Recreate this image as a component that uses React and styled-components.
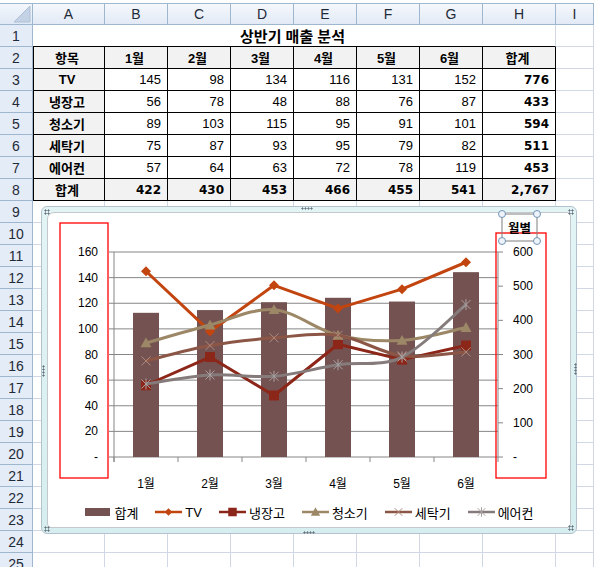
import React from 'react';
import styled, { createGlobalStyle, css } from 'styled-components';

const GlobalStyle = createGlobalStyle`
  html, body { margin: 0; padding: 0; background: #fff; }
  body {
    width: 594px;
    height: 567px;
    overflow: hidden;
    font-family: "Liberation Sans", "Noto Sans CJK KR", sans-serif;
  }
`;

const COLS = ['A', 'B', 'C', 'D', 'E', 'F', 'G', 'H', 'I'];
const MONTHS = ['1월', '2월', '3월', '4월', '5월', '6월'];

const SERIES = [
  { name: 'TV', values: [145, 98, 134, 116, 131, 152], total: 776, color: '#c2440f', marker: 'diamond' },
  { name: '냉장고', values: [56, 78, 48, 88, 76, 87], total: 433, color: '#8c2618', marker: 'square' },
  { name: '청소기', values: [89, 103, 115, 95, 91, 101], total: 594, color: '#9c8766', marker: 'triangle', smooth: true },
  { name: '세탁기', values: [75, 87, 93, 95, 79, 82], total: 511, color: '#8c5646', marker: 'x', smooth: true },
  { name: '에어컨', values: [57, 64, 63, 72, 78, 119], total: 453, color: '#857b7b', marker: 'star', smooth: true },
];
const TOTALS = [422, 430, 453, 466, 455, 541];
const BAR_COLOR = '#745252';

const Sheet = styled.div`
  position: relative;
  width: 594px;
  height: 567px;
  overflow: hidden;
  padding-top: 3px;
  box-sizing: border-box;
`;

const Grid = styled.div`
  display: grid;
  grid-template-columns: 33px 72px repeat(6, 63px) 73px 1fr;
  grid-template-rows: 22px repeat(25, 22px);
`;

const Corner = styled.div`
  box-sizing: border-box;
  border-top: 1px solid #9eb6ce;
  border-right: 1px solid #9eb6ce;
  border-bottom: 1px solid #9eb6ce;
  background: linear-gradient(#f3f7fc, #dfe8f5);
  display: flex;
  align-items: flex-end;
  justify-content: flex-end;
  padding: 0 1px 1px 0;
`;

const ColHead = styled.div`
  box-sizing: border-box;
  border-top: 1px solid #9eb6ce;
  border-right: 1px solid #9eb6ce;
  border-bottom: 1px solid #9eb6ce;
  background: linear-gradient(#f5f8fc, #e2eaf6);
  display: flex;
  align-items: center;
  justify-content: center;
  font-size: 14px;
  color: #1f2a38;
`;

const RowHead = styled.div`
  box-sizing: border-box;
  border-right: 1px solid #9eb6ce;
  border-bottom: 1px solid #9eb6ce;
  background: #e4ecf7;
  display: flex;
  align-items: center;
  justify-content: center;
  font-size: 14px;
  color: #1f2a38;
`;

const Cell = styled.div`
  box-sizing: border-box;
  grid-column: span ${p => p.$span || 1};
  border-right: 1px solid ${p => (p.$boxed ? '#000' : '#d0d7e5')};
  border-bottom: 1px solid ${p => (p.$boxed || p.$underline ? '#000' : '#d0d7e5')};
  ${p => p.$edge && css`box-shadow: inset 1px 0 0 #000;`}
  background: ${p => (p.$shade ? '#f2f2f2' : '#fff')};
  display: flex;
  align-items: center;
  justify-content: ${p => (p.$align === 'right' ? 'flex-end' : p.$align === 'center' ? 'center' : 'flex-start')};
  padding: 0 6px 0 3px;
  font-size: ${p => (p.$title ? '15px' : '13px')};
  font-weight: ${p => (p.$bold ? 700 : 400)};
  color: #000;
  white-space: nowrap;
  overflow: hidden;
`;

const Num = styled.span`
  font-family: ${p => (p.$bold ? '"DejaVu Sans", sans-serif' : '"Liberation Sans", sans-serif')};
  font-size: ${p => (p.$bold ? '12px' : '13px')};
  font-weight: ${p => (p.$bold ? 700 : 400)};
`;

/* floating chart object */
const ChartFrame = styled.div`
  position: absolute;
  left: 41px;
  top: 206px;
  width: 536px;
  height: 328px;
  box-sizing: border-box;
  padding: 5px;
  border: 1px solid #b3c2cc;
  border-radius: 6px;
  background: linear-gradient(#e3f4f5, #d6eeef);
`;

const ChartArea = styled.div`
  width: 100%;
  height: 100%;
  box-sizing: border-box;
  background: #fff;
  border: 1px solid #c4c8cc;
  border-radius: 7px 4px 4px 4px;
  display: flex;
  flex-direction: column;
`;

const Plot = styled.svg`
  display: block;
  overflow: visible;
  font-family: "Liberation Sans", "Noto Sans CJK KR", sans-serif;
`;

const Legend = styled.div`
  height: 26px;
  display: flex;
  align-items: center;
  justify-content: center;
  gap: 17px;
  font-size: 13px;
  color: #000;
`;

const LegendItem = styled.div`
  display: flex;
  align-items: center;
  gap: 3px;
`;

const Grip = styled.div`
  position: absolute;
  left: ${p => p.$x}px;
  top: ${p => p.$y}px;
  width: ${p => p.$w}px;
  height: ${p => p.$h}px;
  background: radial-gradient(circle, #66727e 0.9px, transparent 1.2px) 0 0 / 3px 3px;
`;

const X0 = 66;
const PW = 384;
const YB = 244;
const PH = 205;
const cx = i => X0 + 32 + 64 * i;
const yL = v => YB - (v * PH) / 160;
const yR = v => YB - (v * PH) / 600;

function straightPath(pts) {
  return pts.map((p, i) => `${i ? 'L' : 'M'}${p[0]},${p[1]}`).join(' ');
}

function smoothPath(pts) {
  let d = `M${pts[0][0]},${pts[0][1]}`;
  for (let i = 0; i < pts.length - 1; i++) {
    const p0 = pts[i - 1] || pts[i];
    const p1 = pts[i];
    const p2 = pts[i + 1];
    const p3 = pts[i + 2] || p2;
    const c1x = p1[0] + (p2[0] - p0[0]) / 6;
    const c1y = p1[1] + (p2[1] - p0[1]) / 6;
    const c2x = p2[0] - (p3[0] - p1[0]) / 6;
    const c2y = p2[1] - (p3[1] - p1[1]) / 6;
    d += ` C${c1x},${c1y} ${c2x},${c2y} ${p2[0]},${p2[1]}`;
  }
  return d;
}

function Marker({ type, x, y, color, s = 1 }) {
  if (type === 'diamond') {
    const r = 5 * s;
    return <polygon points={`${x},${y - r} ${x + r},${y} ${x},${y + r} ${x - r},${y}`} fill={color} />;
  }
  if (type === 'square') {
    const r = 5 * s;
    return <rect x={x - r} y={y - r} width={r * 2} height={r * 2} fill={color} />;
  }
  if (type === 'triangle') {
    const r = 5.5 * s;
    return <polygon points={`${x},${y - r} ${x + r},${y + r * 0.8} ${x - r},${y + r * 0.8}`} fill={color} />;
  }
  const r = 4.5 * s;
  return (
    <g stroke={type === 'x' ? '#b08a7c' : '#aaa2a2'} strokeWidth="1">
      <line x1={x - r} y1={y - r} x2={x + r} y2={y + r} />
      <line x1={x - r} y1={y + r} x2={x + r} y2={y - r} />
      {type === 'star' && <line x1={x} y1={y - r - 1} x2={x} y2={y + r + 1} />}
    </g>
  );
}

function LegendSwatch({ series }) {
  if (!series) {
    return (
      <svg width="27" height="12">
        <rect x="1" y="2" width="25" height="8" fill={BAR_COLOR} />
      </svg>
    );
  }
  return (
    <svg width="27" height="12">
      <line x1="0" y1="6" x2="27" y2="6" stroke={series.color} strokeWidth="2.5" />
      <Marker type={series.marker} x={13.5} y={6} color={series.color} s={series.marker === 'diamond' ? 0.75 : 0.85} />
    </svg>
  );
}

function Chart() {
  const leftTicks = [0, 1, 2, 3, 4, 5, 6, 7, 8];
  const rightTicks = [0, 1, 2, 3, 4, 5, 6];
  return (
    <ChartFrame>
      <ChartArea>
        <Plot width="522" height="286" viewBox="0 0 522 286">
          {leftTicks.map(k => {
            const y = YB - (k * PH) / 8;
            return (
              <g key={k}>
                <line x1={X0 - 5} y1={y} x2={X0 + PW} y2={y} stroke="#868686" strokeWidth="1" />
                <text x="50" y={y + 4} fontSize="12" textAnchor="end" fill="#000">
                  {k === 0 ? '-' : k * 20}
                </text>
              </g>
            );
          })}
          <line x1={X0} y1={YB - PH} x2={X0} y2={YB + 5} stroke="#868686" />
          <line x1={X0 + PW} y1={YB - PH} x2={X0 + PW} y2={YB} stroke="#868686" />
          {rightTicks.map(k => {
            const y = YB - (k * PH) / 6;
            return (
              <g key={k}>
                <line x1={X0 + PW} y1={y} x2={X0 + PW + 5} y2={y} stroke="#868686" />
                <text x="465" y={y + 4} fontSize="12" fill="#000">
                  {k === 0 ? '-' : k * 100}
                </text>
              </g>
            );
          })}
          {[0, 1, 2, 3, 4, 5, 6].map(i => (
            <line key={i} x1={X0 + 64 * i} y1={YB} x2={X0 + 64 * i} y2={YB + 5} stroke="#868686" />
          ))}
          {MONTHS.map((m, i) => (
            <text key={m} x={cx(i)} y="275" fontSize="12" textAnchor="middle" fill="#000">
              {m}
            </text>
          ))}
          {TOTALS.map((v, i) => (
            <rect key={i} x={cx(i) - 13} y={yR(v)} width="26" height={YB - yR(v)} fill={BAR_COLOR} />
          ))}
          {SERIES.map(s => {
            const pts = s.values.map((v, i) => [cx(i), yL(v)]);
            return (
              <g key={s.name}>
                <path
                  d={s.smooth ? smoothPath(pts) : straightPath(pts)}
                  fill="none"
                  stroke={s.color}
                  strokeWidth="3"
                  strokeLinejoin="round"
                />
                {pts.map((p, i) => (
                  <Marker key={i} type={s.marker} x={p[0]} y={p[1]} color={s.color} />
                ))}
              </g>
            );
          })}
          <rect x="12" y="10" width="48" height="255" fill="none" stroke="#ff0000" strokeWidth="1.3" />
          <rect x="448" y="20" width="50" height="245" fill="none" stroke="#ff0000" strokeWidth="1.3" />
          <text x="471.5" y="20" fontSize="12.5" fontWeight="700" textAnchor="middle" fill="#000">
            월별
          </text>
          <rect x="454" y="1" width="35" height="27" fill="none" stroke="#7f7f7f" strokeWidth="1" />
          {[[454, 1], [489, 1], [454, 28], [489, 28]].map(([x, y], i) => (
            <circle key={i} cx={x} cy={y} r="3.5" fill="#eef3f9" stroke="#7293b5" strokeWidth="1" />
          ))}
        </Plot>
        <Legend>
          <LegendItem>
            <LegendSwatch />
            <span>합계</span>
          </LegendItem>
          {SERIES.map(s => (
            <LegendItem key={s.name}>
              <LegendSwatch series={s} />
              <span>{s.name}</span>
            </LegendItem>
          ))}
        </Legend>
      </ChartArea>
      <Grip $x={2} $y={2} $w={6} $h={6} />
      <Grip $x={526} $y={2} $w={6} $h={6} />
      <Grip $x={2} $y={319} $w={6} $h={6} />
      <Grip $x={526} $y={318} $w={6} $h={6} />
      <Grip $x={259} $y={0} $w={12} $h={3} />
      <Grip $x={261} $y={324} $w={12} $h={3} />
      <Grip $x={0} $y={158} $w={3} $h={12} />
      <Grip $x={532} $y={156} $w={3} $h={12} />
    </ChartFrame>
  );
}

function SheetRow({ r }) {
  const cells = [];
  if (r === 1) {
    cells.push(
      <Cell key="title" $span={8} $align="center" $bold $title $underline>
        상반기 매출 분석
      </Cell>
    );
  } else if (r === 2) {
    cells.push(
      <Cell key="A" $boxed $edge $shade $bold $align="center">항목</Cell>,
      ...MONTHS.map(m => (
        <Cell key={m} $boxed $shade $bold $align="center">{m}</Cell>
      )),
      <Cell key="H" $boxed $shade $bold $align="center">합계</Cell>
    );
  } else if (r >= 3 && r <= 7) {
    const s = SERIES[r - 3];
    cells.push(
      <Cell key="A" $boxed $edge $shade $bold $align="center">{s.name}</Cell>,
      ...s.values.map((v, i) => (
        <Cell key={i} $boxed $align="right"><Num>{v}</Num></Cell>
      )),
      <Cell key="H" $boxed $align="right"><Num $bold>{s.total}</Num></Cell>
    );
  } else if (r === 8) {
    cells.push(
      <Cell key="A" $boxed $edge $shade $bold $align="center">합계</Cell>,
      ...TOTALS.map((v, i) => (
        <Cell key={i} $boxed $shade $align="right"><Num $bold>{v}</Num></Cell>
      )),
      <Cell key="H" $boxed $shade $align="right"><Num $bold>2,767</Num></Cell>
    );
  } else {
    for (let c = 0; c < 8; c++) cells.push(<Cell key={c} />);
  }
  cells.push(<Cell key="I" />);
  return (
    <>
      <RowHead>{r}</RowHead>
      {cells}
    </>
  );
}

export default function App() {
  const rows = Array.from({ length: 25 }, (_, i) => i + 1);
  return (
    <>
      <GlobalStyle />
      <Sheet>
        <Grid>
          <Corner>
            <svg width="18" height="17">
              <polygon points="17,0 17,16 1,16" fill="#c3d2e4" stroke="#aebfd4" strokeWidth="1" />
            </svg>
          </Corner>
          {COLS.map(c => (
            <ColHead key={c}>{c}</ColHead>
          ))}
          {rows.map(r => (
            <SheetRow key={r} r={r} />
          ))}
        </Grid>
        <Chart />
      </Sheet>
    </>
  );
}
